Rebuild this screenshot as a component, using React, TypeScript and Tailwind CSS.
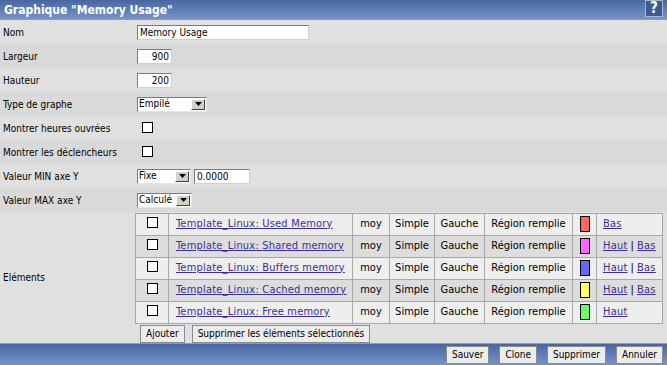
import React from "react";

const font = { fontFamily: '"DejaVu Sans Condensed", "DejaVu Sans", Verdana, sans-serif' };

const Box = () => <span className="inline-block w-[11px] h-[11px] bg-white border border-black" />;

const Select = ({ value, w }: { value: string; w: string }) => (
  <div className={`flex items-center h-[15px] bg-white border border-[#7a7a7a] border-r-[#e6e6e6] border-b-[#e6e6e6] ${w}`}>
    <span className="flex-1 pl-[1px] text-[10px] leading-none text-black">{value}</span>
    <span className="w-[14px] h-[11px] mr-[1px] bg-[#d4d0c8] border border-white border-r-[#404040] border-b-[#404040] flex items-center justify-center">
      <svg width="7" height="4" viewBox="0 0 7 4"><path d="M0 0h7L3.5 4z" fill="#000" /></svg>
    </span>
  </div>
);

const Input = ({ value, w, right }: { value: string; w: string; right?: boolean }) => (
  <div className={`h-[15px] bg-white border border-[#7a7a7a] border-r-[#d0d0d0] border-b-[#d0d0d0] flex items-center px-[2px] text-[10px] text-black ${w} ${right ? "justify-end" : ""}`}>
    {value}
  </div>
);

const Row = ({ label, dark, children }: { label: string; dark?: boolean; children?: React.ReactNode }) => (
  <div className={`flex items-center h-[24px] ${dark ? "bg-[#d9d9d9]" : "bg-[#e0e0e0]"}`}>
    <div className="w-[137px] pl-[3px] text-[10px] text-black">{label}</div>
    <div className="flex items-center gap-[3px]">{children}</div>
  </div>
);

const Btn = ({ children }: { children: React.ReactNode }) => (
  <button className="h-[18px] px-[5px] bg-[#ececec] border border-[#8a8a8a] text-[10px] leading-none text-black">{children}</button>
);

const items = [
  { name: "Used Memory", color: "bg-[#ff6666]", up: false, down: true },
  { name: "Shared memory", color: "bg-[#ff66ff]", up: true, down: true },
  { name: "Buffers memory", color: "bg-[#6666ff]", up: true, down: true },
  { name: "Cached memory", color: "bg-[#ffff66]", up: true, down: true },
  { name: "Free memory", color: "bg-[#66ff66]", up: true, down: false },
];

const link = "text-[#3b2f96] underline tracking-[0.2px]";

export default function App() {
  return (
    <div style={font} className="w-[667px] h-[365px] bg-[#e0e0e0] flex flex-col overflow-hidden">
      <div className="h-[20px] bg-gradient-to-b from-[#4766a2] to-[#7893c6] border-b border-[#9a9a9a] flex items-center justify-between pl-[4px] pr-[4px]">
        <span className="text-white font-bold text-[12px]">Graphique "Memory Usage"</span>
        <span className="w-[18px] h-[17px] -mt-[3px] bg-[#3e5a91] border border-[#a9b6cf] flex items-center justify-center text-white font-bold text-[15px] leading-none">?</span>
      </div>

      <Row label="Nom"><Input value="Memory Usage" w="w-[172px]" /></Row>
      <Row label="Largeur" dark><Input value="900" w="w-[35px]" right /></Row>
      <Row label="Hauteur"><Input value="200" w="w-[35px]" right /></Row>
      <Row label="Type de graphe" dark><Select value="Empilé" w="w-[70px]" /></Row>
      <Row label="Montrer heures ouvrées"><span className="pl-[5px]"><Box /></span></Row>
      <Row label="Montrer les déclencheurs" dark><span className="pl-[5px]"><Box /></span></Row>
      <Row label="Valeur MIN axe Y">
        <Select value="Fixe" w="w-[54px]" />
        <Input value="0.0000" w="w-[56px]" />
      </Row>
      <Row label="Valeur MAX axe Y" dark><Select value="Calculé" w="w-[55px]" /></Row>

      <div className="flex items-center bg-[#e0e0e0] h-[131px]">
        <div className="w-[135px] pl-[3px] text-[10px] text-black">Eléments</div>
        <div className="flex flex-col">
          <table className="border-collapse text-[11px] text-black w-[528px]">
            <tbody>
              {items.map((it, i) => (
                <tr key={it.name} className={`h-[22px] ${i % 2 ? "bg-[#dddddd]" : "bg-[#eeeeee]"}`}>
                  <td className="border border-[#a8a8a8] w-[33px] text-center align-middle"><span className="inline-flex pt-[2px]"><Box /></span></td>
                  <td className="border border-[#a8a8a8] w-[184px] pl-[7px]"><span className={link}>Template_Linux: {it.name}</span></td>
                  <td className="border border-[#a8a8a8] w-[37px] text-center">moy</td>
                  <td className="border border-[#a8a8a8] w-[45px] text-center">Simple</td>
                  <td className="border border-[#a8a8a8] w-[50px] text-center">Gauche</td>
                  <td className="border border-[#a8a8a8] w-[88px] text-center">Région remplie</td>
                  <td className="border border-[#a8a8a8] w-[24px] text-center">
                    <span className={`inline-block w-[10px] h-[16px] border border-black align-middle ${it.color}`} />
                  </td>
                  <td className="border border-[#a8a8a8] pl-[6px]">
                    {it.up && <span className={link}>Haut</span>}
                    {it.up && it.down && <span> | </span>}
                    {it.down && <span className={link}>Bas</span>}
                  </td>
                </tr>
              ))}
            </tbody>
          </table>
          <div className="flex gap-[7px] pl-[5px] pt-[1px]">
            <Btn>Ajouter</Btn>
            <Btn>Supprimer les éléments sélectionnés</Btn>
          </div>
        </div>
      </div>

      <div className="flex-1 bg-gradient-to-b from-[#4766a2] to-[#7893c6] border-t border-[#9a9a9a] flex items-center justify-end gap-[10px] pr-[4px]">
        <Btn>Sauver</Btn>
        <Btn>Clone</Btn>
        <Btn>Supprimer</Btn>
        <Btn>Annuler</Btn>
      </div>
    </div>
  );
}
